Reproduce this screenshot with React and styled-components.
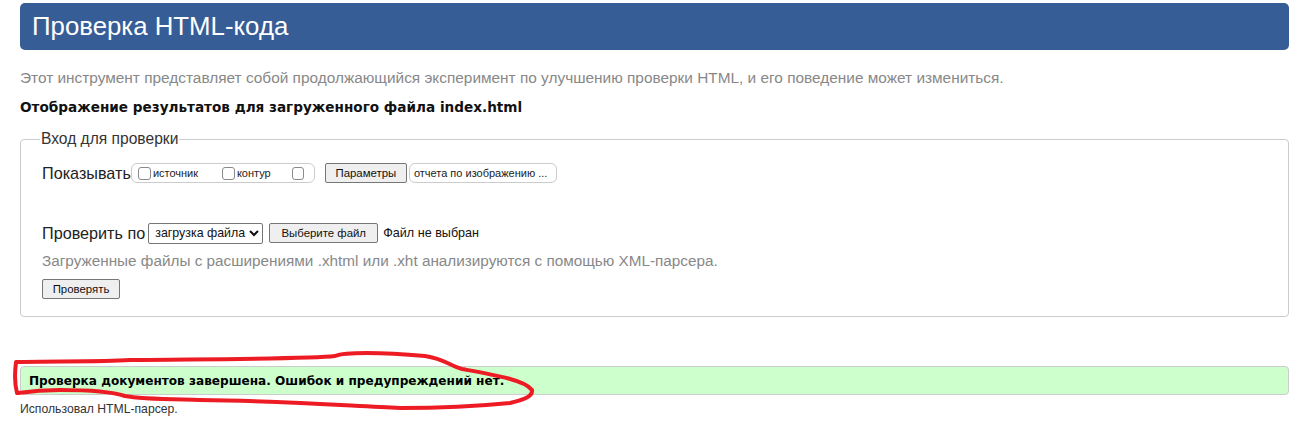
import React from 'react';
import styled, { createGlobalStyle } from 'styled-components';

const Global = createGlobalStyle`
    body {
        margin: 0;
        background: #fff;
        font-family: "Liberation Sans", Arial, sans-serif;
        color: #222;
    }
`;

const Page = styled.div`
    position: relative;
    padding: 3px 4px 0 20px;
    height: 425px;
    box-sizing: border-box;
`;

const Header = styled.div`
    background: #365d95;
    border-radius: 5px;
    height: 47px;
    padding-left: 12px;
    display: flex;
    align-items: center;
`;

const Title = styled.h1`
    margin: 0;
    font-size: 25.8px;
    font-weight: 400;
    color: #fff;
`;

const Intro = styled.p`
    margin: 19px 0 0;
    font-size: 15.4px;
    line-height: 18px;
    color: #888;
`;

const Heading = styled.h2`
    margin: 11px 0 0;
    font-family: "DejaVu Sans", Verdana, sans-serif;
    font-size: 13.6px;
    line-height: 18px;
    font-weight: 700;
    color: #111;
`;

const Fieldset = styled.fieldset`
    margin: 14px 0 0;
    padding: 2px 20px 14px 21px;
    border: 1px solid #ccc;
    border-radius: 4px;
    height: 187px;
    box-sizing: border-box;
`;

const Legend = styled.legend`
    font-size: 15.6px;
    color: #333;
    padding: 0 1px;
    margin-left: -2px;
`;

const Row = styled.div`
    display: flex;
    align-items: center;
    height: 20px;
    margin-top: ${p => p.$top || 0}px;
    font-size: 16.2px;
    color: #222;
`;

const Group = styled.span`
    display: inline-flex;
    align-items: center;
    box-sizing: border-box;
    height: 20px;
    width: ${p => p.$w}px;
    margin-left: ${p => p.$ml || 0}px;
    border: 1px solid #ccc;
    border-radius: 6px;
    padding-left: ${p => p.$pl || 6}px;
    font-size: 11px;
    color: #222;
`;

const Check = styled.input.attrs({ type: 'checkbox' })`
    appearance: none;
    box-sizing: border-box;
    margin: 0 2px 0 0;
    width: 13px;
    height: 13px;
    border: 1px solid #8a8a8a;
    border-radius: 3px;
    background: #fff;
`;

const CheckLabel = styled.label`
    display: inline-flex;
    align-items: center;
    width: ${p => p.$w}px;
`;

const Button = styled.button`
    box-sizing: border-box;
    height: 20px;
    width: ${p => p.$w}px;
    margin-left: ${p => p.$ml || 0}px;
    padding: 0;
    font-family: "Liberation Sans", Arial, sans-serif;
    font-size: 11.4px;
    color: #111;
    background: #efefef;
    border: 1px solid #767676;
    border-radius: 2px;
`;

const Select = styled.select`
    box-sizing: border-box;
    height: 21px;
    width: 115px;
    margin-left: 3px;
    padding: 0 0 0 2px;
    font-family: "Liberation Sans", Arial, sans-serif;
    font-size: 12.4px;
    border: 1px solid #767676;
    border-radius: 2px;
    background: #fff;
    color: #111;
`;

const Small = styled.span`
    font-size: 12.6px;
    margin-left: 5px;
    color: #111;
`;

const Hint = styled.div`
    margin-top: 9px;
    font-size: 15.3px;
    line-height: 18px;
    color: #888;
`;

const Result = styled.div`
    margin-top: 49px;
    height: 29px;
    box-sizing: border-box;
    background: #ccffcc;
    border: 1px solid #ccc;
    border-radius: 4px;
    padding-left: 8px;
    display: flex;
    align-items: center;
    font-family: "DejaVu Sans", Verdana, sans-serif;
    font-size: 12.1px;
    font-weight: 700;
    color: #000;
`;

const Footer = styled.div`
    margin-top: 7px;
    font-size: 12.2px;
    color: #333;
`;

const Scribble = styled.svg`
    position: absolute;
    left: 0;
    top: 0;
    pointer-events: none;
`;

export default function App() {
    return (
        <Page>
            <Global />
            <Header>
                <Title>Проверка HTML-кода</Title>
            </Header>
            <Intro>Этот инструмент представляет собой продолжающийся эксперимент по улучшению проверки HTML, и его поведение может измениться.</Intro>
            <Heading>Отображение результатов для загруженного файла index.html</Heading>
            <Fieldset>
                <Legend>Вход для проверки</Legend>
                <Row $top={13}>
                    Показывать
                    <Group $w={184}>
                        <CheckLabel $w={84}><Check />источник</CheckLabel>
                        <CheckLabel $w={70}><Check />контур</CheckLabel>
                        <CheckLabel $w={14}><Check /></CheckLabel>
                    </Group>
                    <Button $w={82} $ml={10}>Параметры</Button>
                    <Group $w={148} $ml={2} $pl={4}>отчета по изображению ...</Group>
                </Row>
                <Row $top={40}>
                    Проверить по
                    <Select defaultValue="file">
                        <option value="file">загрузка файла</option>
                    </Select>
                    <Button $w={109} $ml={6}>Выберите файл</Button>
                    <Small>Файл не выбран</Small>
                </Row>
                <Hint>Загруженные файлы с расширениями .xhtml или .xht анализируются с помощью XML-парсера.</Hint>
                <Row $top={9}>
                    <Button $w={78}>Проверять</Button>
                </Row>
            </Fieldset>
            <Result>Проверка документов завершена. Ошибок и предупреждений нет.</Result>
            <Footer>Использовал HTML-парсер.</Footer>
            <Scribble width="1293" height="425">
                <path
                    d="M17 393 C14 382 15 370 16 362 C50 361 100 362 130 360 C220 359 310 359 335 356 C345 352 380 352 425 356 C445 359 450 366 462 369 C495 375 525 380 532 390 C533 397 522 400 510 403 C480 406 440 408 400 408 C350 406 290 401 200 400 C160 399 140 399 125 396 C110 391 90 390 60 390 C40 390 25 392 18 393"
                    fill="none"
                    stroke="#ed1c24"
                    strokeWidth="4"
                    strokeLinecap="round"
                    strokeLinejoin="round"
                />
            </Scribble>
        </Page>
    );
}
